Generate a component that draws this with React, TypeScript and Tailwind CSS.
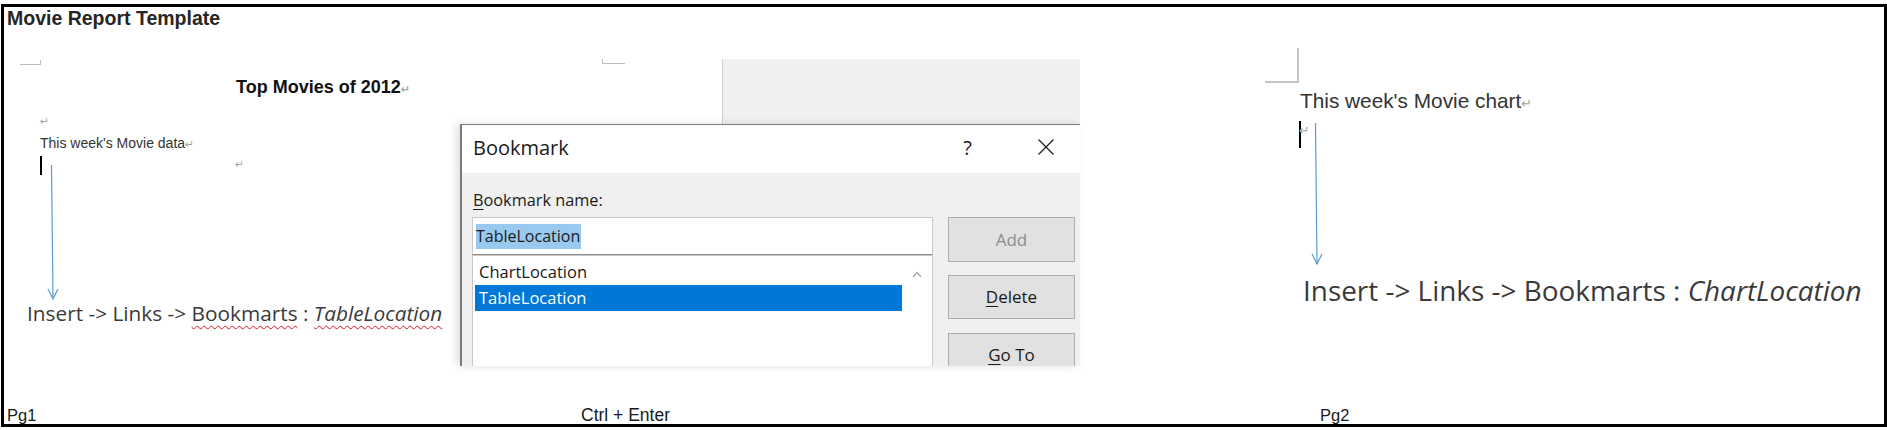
import React from "react";

const sans = "font-['Liberation_Sans',Arial,sans-serif]";
const open = "font-['Open_Sans',sans-serif]";

function Pilcrow({ className = "" }: { className?: string }) {
  return <span className={`font-['DejaVu_Sans',sans-serif] text-[11px] text-[#a6a6a6] ${className}`}>↵</span>;
}

function DownArrow({ height }: { height: number }) {
  return (
    <svg width="12" height={height} viewBox={`0 0 12 ${height}`}>
      <path d={`M4.5 0 L6 ${height - 1}`} stroke="#5b9bd5" strokeWidth="1.2" fill="none" />
      <path d={`M1 ${height - 11} L6 ${height - 1} L11 ${height - 11}`} stroke="#5b9bd5" strokeWidth="1.2" fill="none" />
    </svg>
  );
}

function Bookmark() {
  return (
    <div className={`h-[242px] w-[620px] overflow-hidden border-t border-l-2 border-[#7a7a7a] shadow-[-4px_0_8px_rgba(0,0,0,0.12)] ${open}`}>
      <div className="flex h-[48px] items-start justify-between bg-white pl-[11px] pr-[26px] pt-[9px] text-[#1a1a1a]">
        <span className="text-[20px] leading-[27px]">Bookmark</span>
        <div className="flex items-start gap-[66px]">
          <span className="text-[20px] leading-[27px]">?</span>
          <svg width="16" height="16" viewBox="0 0 16 16" className="mt-[5px]">
            <path d="M0.5 0.5 L15.5 15.5 M15.5 0.5 L0.5 15.5" stroke="#1a1a1a" strokeWidth="1.2" fill="none" />
          </svg>
        </div>
      </div>

      <div className="h-[200px] bg-[#f0f0f0] pl-[10px] pt-[16px]">
        <div className="ml-[1px] text-[16.3px] leading-[22px] text-[#1a1a1a]">
          <span className="underline underline-offset-[3px]">B</span>ookmark name:
        </div>

        <div className="mt-[6px] flex gap-[15px]">
          <div className="flex w-[461px] flex-col">
            <div className="flex h-[38px] items-center border border-[#c8c8c8] border-b-[#8c8c8c] bg-white pl-[3px]">
              <span className="bg-[#99c9ef] pr-[1px] text-[16px] leading-[25px] text-[#1a1a1a]">TableLocation</span>
            </div>
            <div className="flex h-[140px] border border-[#c8c8c8] bg-white">
              <div className="flex-1 pl-[2px] pt-[3px] text-[16.5px] leading-[26px]">
                <div className="h-[26px] pl-[4px] text-[#1a1a1a]">ChartLocation</div>
                <div className="h-[26px] bg-[#0078d7] pl-[4px] text-white">TableLocation</div>
              </div>
              <div className="flex w-[30px] justify-center pt-[15px]">
                <svg width="10" height="7" viewBox="0 0 10 7">
                  <path d="M1 6 L5 1.5 L9 6" stroke="#a6a6a6" strokeWidth="1.2" fill="none" />
                </svg>
              </div>
            </div>
          </div>

          <div className="flex w-[127px] flex-col text-[17px]">
            <div className="flex h-[45px] items-center justify-center border border-[#adadad] bg-[#e1e1e1] text-[#8d8d8d]">Add</div>
            <div className="mt-[13px] flex h-[44px] items-center justify-center border border-[#adadad] bg-[#e1e1e1] text-[#1a1a1a]">
              <span><span className="underline underline-offset-[3px]">D</span>elete</span>
            </div>
            <div className="mt-[14px] flex h-[44px] items-center justify-center border border-[#adadad] bg-[#e1e1e1] text-[#1a1a1a]">
              <span><span className="underline underline-offset-[3px]">G</span>o To</span>
            </div>
          </div>
        </div>
      </div>
    </div>
  );
}

export default function App() {
  return (
    <div className="ml-[1px] mt-[4px] flex h-[423px] w-[1886px] flex-col overflow-hidden border-[3px] border-black bg-white">
      <div className={`h-[22px] pl-[3px] text-[19.5px] font-bold leading-[22px] text-[#262626] ${sans}`}>
        Movie Report Template
      </div>

      <div className="flex flex-1">
        {/* page 1 */}
        <div className="flex w-[456px] flex-col">
          <div className="ml-[16px] mt-[31px] h-[5px] w-[21px] border-b border-r border-[#bdbdbd]" />
          <div className={`ml-[232px] mt-[11px] text-[18px] font-bold leading-[22px] text-[#111] ${sans}`}>
            Top Movies of 2012<Pilcrow />
          </div>
          <div className="ml-[36px] mt-[12px] h-[12px] leading-[12px]">
            <Pilcrow />
          </div>
          <div className={`ml-[36px] mt-[10px] text-[14px] leading-[16px] text-[#333] ${sans}`}>
            This week's Movie data<Pilcrow />
          </div>
          <div className="ml-[36px] mt-[3px] flex items-start">
            <div className="h-[19px] w-[2px] bg-black" />
            <div className="ml-[5px] mt-[9px]">
              <DownArrow height={135} />
            </div>
            <Pilcrow className="ml-[176px] mt-[3px] leading-[12px]" />
          </div>
          <div className={`ml-[23px] text-[20.8px] leading-[26px] text-[#3a3a3a] ${open}`}>
            Insert -&gt; Links -&gt;{" "}
            <span className="underline decoration-[#e81123] decoration-wavy decoration-1 underline-offset-[4px]">Bookmarts</span> :{" "}
            <span className="italic underline decoration-[#e81123] decoration-wavy decoration-1 underline-offset-[4px]">TableLocation</span>
          </div>
          <div className={`ml-[3px] mt-auto text-[16.5px] leading-[17px] text-[#1a1a1a] ${sans}`}>Pg1</div>
        </div>

        {/* middle: page break + dialog */}
        <div className="flex w-[620px] flex-col">
          <div className="mt-[30px] flex h-[65px]">
            <div className="w-[262px]">
              <div className="ml-[142px] h-[5px] w-[23px] border-b border-l border-[#bdbdbd]" />
            </div>
            <div className="flex-1 border-l border-[#d0d0d0] bg-[#f0f0f0]" />
          </div>
          <Bookmark />
          <div className={`ml-[121px] mt-auto text-[17.5px] leading-[17px] text-[#1a1a1a] ${sans}`}>Ctrl + Enter</div>
        </div>

        {/* page 2 */}
        <div className="flex flex-1 flex-col">
          <div className="ml-[185px] mt-[19px] h-[35px] w-[34px] border-b-2 border-r-2 border-[#c6c6c6]" />
          <div className={`ml-[220px] mt-[6px] text-[20.8px] leading-[24px] text-[#333] ${sans}`}>
            This week's Movie chart<Pilcrow className="text-[13px]" />
          </div>
          <div className="ml-[219px] mt-[5px] flex items-start">
            <div className="h-[27px] w-[2px] bg-black" />
            <Pilcrow className="-ml-[2px] mt-[3px] w-[10px] text-[13px] leading-[14px]" />
            <div className="ml-[2px] mt-[2px]">
              <DownArrow height={142} />
            </div>
          </div>
          <div className={`ml-[223px] mt-[8px] text-[27.9px] leading-[34px] text-[#3a3a3a] ${open}`}>
            Insert -&gt; Links -&gt; Bookmarts : <span className="italic">ChartLocation</span>
          </div>
          <div className={`ml-[240px] mt-auto text-[16.5px] leading-[17px] text-[#1a1a1a] ${sans}`}>Pg2</div>
        </div>
      </div>
    </div>
  );
}
